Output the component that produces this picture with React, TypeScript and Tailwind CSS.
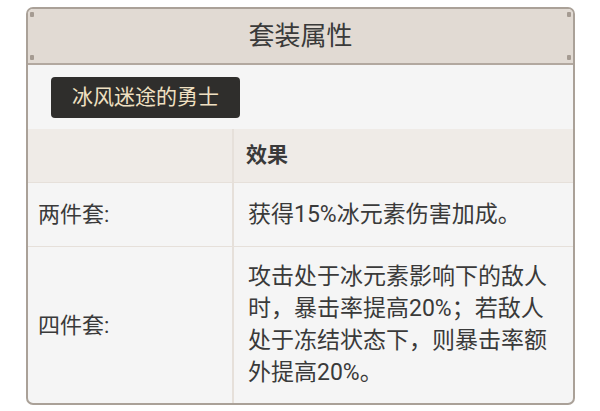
import React from 'react';

const rows = [
  { label: '两件套:', effect: ['获得15%冰元素伤害加成。'] },
  {
    label: '四件套:',
    effect: ['攻击处于冰元素影响下的敌人', '时，暴击率提高20%；若敌人', '处于冻结状态下，则暴击率额', '外提高20%。'],
  },
];

// little corner rivets on the header bar
const Rivets: React.FC = () => (
  <div className="flex flex-col justify-between h-full py-[3px] px-[2px]">
    <div className="w-[4px] h-[5px] bg-[#a59b92] rounded-[1px]" />
    <div className="w-[4px] h-[5px] bg-[#a59b92] rounded-[1px]" />
  </div>
);

const App: React.FC = () => {
  return (
    <div
      className="w-[600px] h-[411px] bg-white pt-[7px] pl-[26px]"
      style={{ fontFamily: 'Roboto, "Noto Sans CJK SC", sans-serif' }}
    >
      <div className="w-[549px] border-2 border-[#aaa198] rounded-[7px] overflow-hidden bg-[#f5f5f5] text-[#3a3a3a]">
        {/* Header */}
        <div className="h-[56px] bg-[#e1dad3] border-b-2 border-[#b2a89f] flex items-stretch">
          <Rivets />
          <div className="flex-1 flex items-center justify-center text-[26px] leading-none">套装属性</div>
          <Rivets />
        </div>

        {/* Set name */}
        <div className="h-[64px] pt-[12px] pl-[23px]">
          <div className="inline-flex items-center h-[41px] px-[21px] bg-[#2f2e2c] rounded-[4px] text-[#efe0c2] text-[21px]">
            冰风迷途的勇士
          </div>
        </div>

        {/* Table */}
        <div className="grid grid-cols-[206px_1fr]">
          <div className="h-[54px] bg-[#efebe7] border-r-2 border-[#e6e0da] border-b border-b-[#e6e0da]" />
          <div className="h-[54px] bg-[#efebe7] border-b border-[#e6e0da] flex items-center pl-[12px] text-[21px] font-bold">
            效果
          </div>
          {rows.map((row, i) => (
            <React.Fragment key={row.label}>
              <div
                className={`flex items-center pl-[10px] text-[22px] border-r-2 border-[#e6e0da] ${
                  i < rows.length - 1 ? 'h-[64px] border-b border-b-[#e6e0da]' : 'h-[156px]'
                }`}
              >
                {row.label}
              </div>
              <div
                className={`flex flex-col justify-center pl-[14px] text-[23px] leading-[32px] ${
                  i < rows.length - 1 ? 'h-[64px] border-b border-[#e6e0da]' : 'h-[156px]'
                }`}
              >
                {row.effect.map((line) => (
                  <div key={line} className="whitespace-nowrap">{line}</div>
                ))}
              </div>
            </React.Fragment>
          ))}
        </div>
      </div>
    </div>
  );
};

export default App;
